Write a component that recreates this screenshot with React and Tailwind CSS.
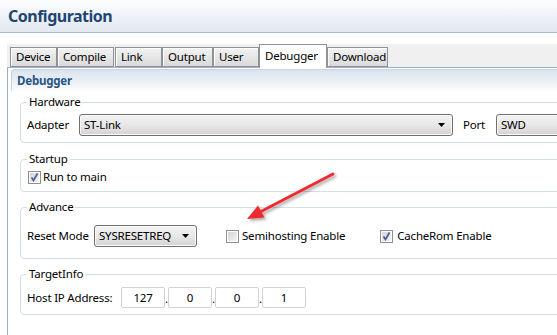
import React from "react";

const font = { fontFamily: '"Noto Sans", "Open Sans", Arial, sans-serif' };
const T = "text-[11.5px] tracking-[-0.2px] text-black";

function Tab({ label, selected, w }) {
  if (selected) {
    return (
      <div
        className={`relative z-10 -mb-px h-[24px] ${w} px-[5px] flex items-start pt-[3px] bg-white border border-b-0 border-[#8e9296] leading-[16px] ${T}`}
      >
        {label}
      </div>
    );
  }
  return (
    <div
      className={`h-[20px] ${w} px-[5px] flex items-center border border-[#8e9296] bg-gradient-to-b from-[#f3f3f3] to-[#dadada] leading-[16px] shadow-[inset_1px_1px_0_#ffffff] ${T}`}
    >
      {label}
    </div>
  );
}

function Select({ value, w, children }) {
  return (
    <div
      className={`h-[22px] ${w} shrink-0 flex items-center justify-between pl-[4px] pr-[6px] border border-[#707070] rounded-[3px] bg-gradient-to-b from-[#f3f3f3] via-[#e8e8e8] to-[#d3d3d3] shadow-[inset_0_0_0_1px_#fafafa] ${T}`}
    >
      <span>{value}</span>
      {children}
    </div>
  );
}

function Arrow() {
  return (
    <svg width="8" height="5" viewBox="0 0 8 5">
      <path d="M0 0 H7 L3.5 4 Z" fill="#000" />
    </svg>
  );
}

function Checkbox({ checked }) {
  return (
    <div className="w-[13px] h-[13px] shrink-0 border border-[#8f8f8f] bg-white p-[1px]">
      <div className="w-full h-full bg-gradient-to-br from-[#d4d4d4] to-[#f6f6f6] relative">
        {checked && (
          <svg className="absolute left-0 top-0" width="9" height="9" viewBox="0 0 9 9">
            <path d="M1.5 4.5 L3.5 7.5 L7.5 0.5" stroke="#4a5d99" strokeWidth="1.7" fill="none" />
          </svg>
        )}
      </div>
    </div>
  );
}

function Group({ title, className = "", children }) {
  return (
    <fieldset className={`border border-[#d5dde6] rounded-[4px] w-[620px] ${className}`}>
      <legend className={`ml-[6px] px-[2px] leading-[16px] ${T}`}>{title}</legend>
      {children}
    </fieldset>
  );
}

function IpBox({ v }) {
  return (
    <div className={`w-[44px] h-[21px] shrink-0 flex items-center justify-center border border-[#cfd3d8] rounded-[2px] bg-white ${T}`}>
      {v}
    </div>
  );
}

function Dot() {
  return <div className={`w-[3px] shrink-0 flex justify-center items-end h-[21px] pb-[3px] leading-[12px] ${T}`}>.</div>;
}

export default function App() {
  return (
    <div className="relative w-[557px] h-[335px] overflow-hidden bg-white" style={font}>
      <div className="h-[33px] bg-gradient-to-b from-[#fdfdfe] to-[#e1e8f0] border-b border-[#a9bdd4] px-[8px] flex items-center">
        <span className="text-[16px] tracking-[-0.5px] font-bold text-[#1f4573] leading-none">Configuration</span>
      </div>
      <div className="h-[11px]" />
      <div className="ml-[7px] w-[700px]">
        <div className="h-[23px] bg-[#f0f0f0] flex items-end pl-[3px]">
          <Tab label="Device" w="w-[47px]" />
          <Tab label="Compile" w="w-[57px]" />
          <div className="w-[1px]" />
          <Tab label="Link" w="w-[47px]" />
          <Tab label="Output" w="w-[51px]" />
          <Tab label="User" w="w-[46px]" />
          <Tab label="Debugger" selected w="w-[68px]" />
          <Tab label="Download" w="w-[61px]" />
        </div>
        <div className="border-l border-t border-[#9fb1c6] h-[300px] pl-[3px] pt-[1px]">
          <div className="h-[22px] rounded-tl-[4px] border-l border-t border-[#c8d4e2] bg-gradient-to-b from-[#dae3ee] to-[#fbfcfd] flex items-center pl-[5px]">
            <span className="text-[11.5px] tracking-[-0.2px] font-bold text-[#2a5386]">Debugger</span>
          </div>
          <div className="pl-[9px] pt-[3px] flex flex-col">
            <Group title="Hardware" className="pb-[6px]">
              <div className="flex items-center pl-[6px] pt-[4px]">
                <span className={`w-[52px] shrink-0 ${T}`}>Adapter</span>
                <Select value="ST-Link" w="w-[374px]">
                  <Arrow />
                </Select>
                <span className={`ml-[10px] w-[33px] shrink-0 ${T}`}>Port</span>
                <Select value="SWD" w="w-[120px]" />
              </div>
            </Group>
            <Group title="Startup" className="mt-[8px] pb-[6px]">
              <div className="flex items-center pl-[7px] pt-[2px] h-[18px]">
                <Checkbox checked />
                <span className={`ml-[2px] ${T}`}>Run to main</span>
              </div>
            </Group>
            <Group title="Advance" className="mt-[7px] pb-[11px]">
              <div className="flex items-center pl-[6px] pt-[10px]">
                <span className={`w-[67px] shrink-0 ${T}`}>Reset Mode</span>
                <Select value="SYSRESETREQ" w="w-[103px]">
                  <Arrow />
                </Select>
                <div className="ml-[29px] flex items-center">
                  <Checkbox />
                  <span className={`ml-[3px] ${T}`}>Semihosting Enable</span>
                </div>
                <div className="ml-[35px] flex items-center">
                  <Checkbox checked />
                  <span className={`ml-[4px] ${T}`}>CacheRom Enable</span>
                </div>
              </div>
            </Group>
            <Group title="TargetInfo" className="mt-[7px] pb-[6px]">
              <div className="flex items-center pl-[6px] pt-[5px]">
                <span className={`w-[94px] shrink-0 ${T}`}>Host IP Address:</span>
                <IpBox v="127" />
                <Dot />
                <IpBox v="0" />
                <Dot />
                <IpBox v="0" />
                <Dot />
                <IpBox v="1" />
              </div>
            </Group>
          </div>
        </div>
      </div>
      <svg className="absolute left-0 top-0 pointer-events-none" width="557" height="335" viewBox="0 0 557 335">
        <defs>
          <filter id="sh" x="-20%" y="-20%" width="140%" height="140%">
            <feGaussianBlur in="SourceAlpha" stdDeviation="1.5" />
            <feOffset dx="2" dy="2" result="b" />
            <feComponentTransfer>
              <feFuncA type="linear" slope="0.35" />
            </feComponentTransfer>
            <feMerge>
              <feMergeNode />
              <feMergeNode in="SourceGraphic" />
            </feMerge>
          </filter>
        </defs>
        <g filter="url(#sh)">
          <line x1="333" y1="174" x2="259" y2="212.5" stroke="#ef2b2f" strokeWidth="3" strokeLinecap="round" />
          <polygon points="247,219 264.5,217.5 258,205.5" fill="#ef2b2f" />
        </g>
      </svg>
    </div>
  );
}
